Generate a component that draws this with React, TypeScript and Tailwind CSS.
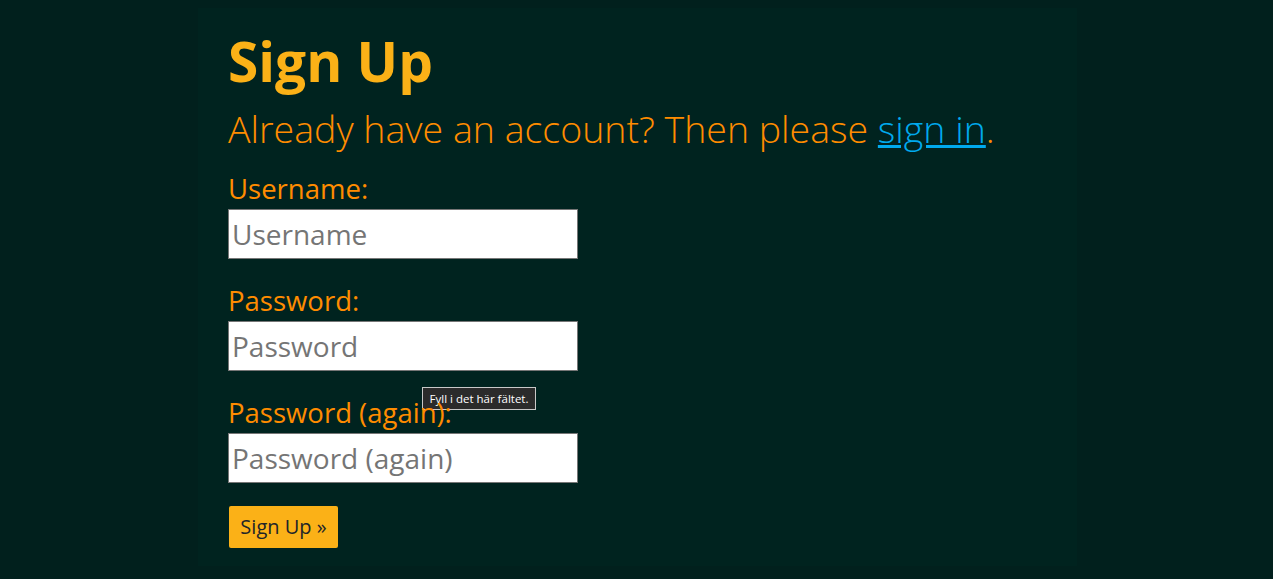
import React from 'react'

const font = { fontFamily: '"Open Sans", "Noto Sans", sans-serif' }

function Field({ label, placeholder, type, tooltip }: { label: string; placeholder: string; type: string; tooltip?: boolean }) {
  return (
    <div className="relative mb-[24px]">
      <label className="block text-[27.5px] leading-[36px] text-[#ff8c00]">{label}</label>
      <input
        type={type}
        placeholder={placeholder}
        className="mt-[2px] block h-[50px] w-[350px] border border-[#767676] bg-white px-[3px] text-[28px] text-[#333] placeholder:text-[#757575] outline-none"
      />
      {tooltip && (
        <div className="absolute left-[194px] top-[104px] flex h-[23px] w-[114px] items-center justify-center border border-[#c8c8c8] bg-[#2b2b2b] text-[11.5px] text-white">
          Fyll i det här fältet.
        </div>
      )}
    </div>
  )
}

export default function App() {
  return (
    <div className="h-[579px] w-full overflow-hidden bg-[#01201d]" style={font}>
      <div className="ml-[198px] mt-[8px] h-[558px] w-[879px] bg-[#00231f] pl-[30px] pt-[21px]">
        <h1 className="text-[55px] font-bold leading-[64px] text-[#fbb117]">Sign Up</h1>
        <p className="mt-[11px] text-[37.5px] font-light leading-[50px] text-[#ff8c00]">
          Already have an account? Then please{' '}
          <a href="#" className="text-[#00aaee] underline">sign in</a>.
        </p>
        <form className="mt-[17px]">
          <Field label="Username:" placeholder="Username" type="text" />
          <Field label="Password:" placeholder="Password" type="password" tooltip />
          <Field label="Password (again):" placeholder="Password (again)" type="password" />
          <button
            type="button"
            className="ml-px -mt-[1px] h-[42px] w-[109px] rounded-[2px] bg-[#fbb117] text-[20px] text-[#212529]"
          >
            Sign Up »
          </button>
        </form>
      </div>
    </div>
  )
}
